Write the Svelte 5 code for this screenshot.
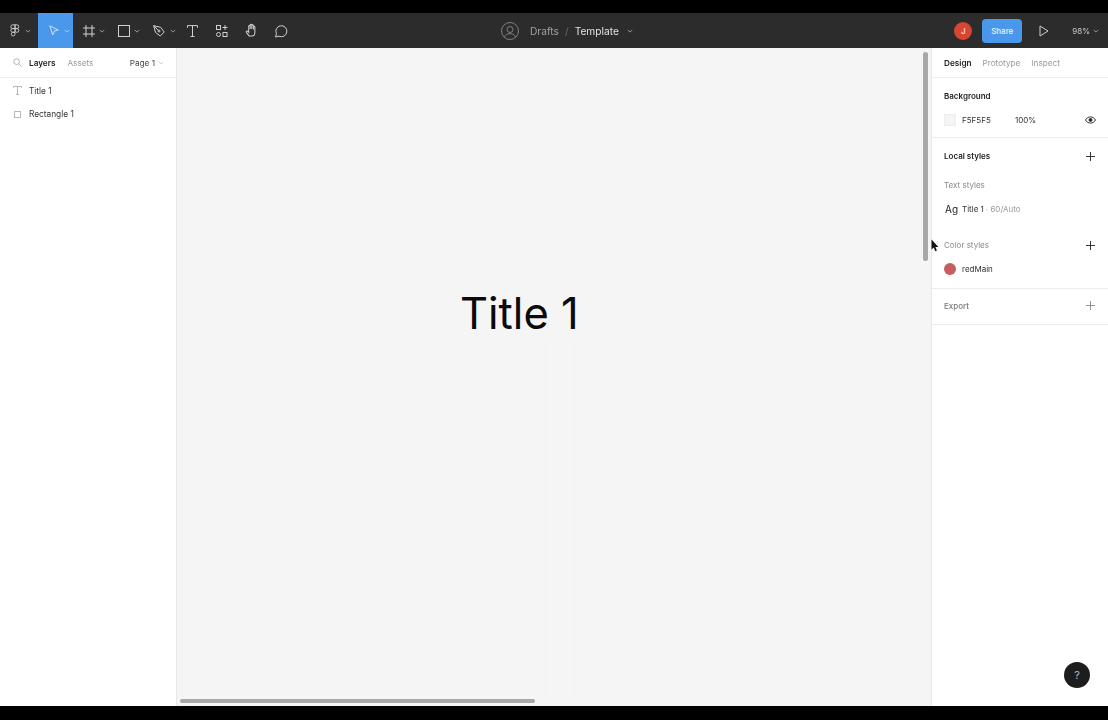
<script>
  const layers = [
    { name: 'Title 1', kind: 'text' },
    { name: 'Rectangle 1', kind: 'rect' }
  ];
</script>

<div class="screen">
  <header class="toolbar">
    <div class="tools">
      <button class="tool menu">
        <svg width="10" height="13" viewBox="0 0 12 16" fill="none" stroke="#d0d0d0" stroke-width="1.1">
          <path d="M6 1H3.200a2.300 2.300 0 0 0 0 4.600H6zM6 1h2.400a2.300 2.300 0 0 1 0 4.600H6zM6 5.600H3.200a2.300 2.300 0 0 0 0 4.600H6zM6 10.200H3.200A2.300 2.300 0 1 0 6 12.500zM10.700 7.900a2.300 2.300 0 1 1-4.700 0 2.300 2.300 0 0 1 4.700 0z" />
        </svg>
        <svg class="chev" viewBox="0 0 8 8"><path d="M1 2.500l3 3 3-3" /></svg>
      </button>
      <button class="tool move">
        <svg width="10" height="11" viewBox="0 0 10 11" fill="none" stroke="#cfe3fb" stroke-width="1">
          <path d="M0.800 0.800l8.400 4.200-3.800 1-1.700 4z" />
        </svg>
        <svg class="chev light" viewBox="0 0 8 8"><path d="M1 2.500l3 3 3-3" /></svg>
      </button>
      <button class="tool frame">
        <svg width="12" height="12" viewBox="0 0 12 12" fill="none" stroke="#d0d0d0" stroke-width="1">
          <path d="M3 0v12M9 0v12M0 3h12M0 9h12" />
        </svg>
        <svg class="chev" viewBox="0 0 8 8"><path d="M1 2.500l3 3 3-3" /></svg>
      </button>
      <button class="tool shape">
        <svg width="12" height="12" viewBox="0 0 12 12" fill="none" stroke="#d0d0d0" stroke-width="1">
          <rect x="0.500" y="0.500" width="11" height="11" />
        </svg>
        <svg class="chev" viewBox="0 0 8 8"><path d="M1 2.500l3 3 3-3" /></svg>
      </button>
      <button class="tool pen">
        <svg width="12" height="12" viewBox="0 0 12 12" fill="none" stroke="#d0d0d0" stroke-width="1">
          <path d="M0.700 0.700l7 1.600 3.500 4.700-3.900 4-4.800-3.500zM0.700 0.700l4.300 4.300" />
          <circle cx="6" cy="6" r="1" />
        </svg>
        <svg class="chev" viewBox="0 0 8 8"><path d="M1 2.500l3 3 3-3" /></svg>
      </button>
      <button class="tool single">
        <svg width="11" height="12" viewBox="0 0 11 12" fill="none" stroke="#d0d0d0" stroke-width="1">
          <path d="M0.500 2.800V0.600h10V2.800M5.500 0.600v10.800M3.500 11.500h4" />
        </svg>
      </button>
      <button class="tool single">
        <svg width="12" height="12" viewBox="0 0 12 12" fill="none" stroke="#d0d0d0" stroke-width="1">
          <rect x="0.500" y="0.500" width="4" height="4" />
          <path d="M9 0v5M6.500 2.500h5" />
          <circle cx="2.500" cy="9.500" r="2" />
          <rect x="7" y="7.500" width="4" height="4" />
        </svg>
      </button>
      <button class="tool single">
        <svg width="14" height="15" viewBox="0 0 15 15" fill="none" stroke="#d0d0d0" stroke-width="1.100" stroke-linecap="round">
          <path d="M4.500 13.500L1.500 9.500c-.7-1 .6-2 1.500-1.200L4 9.500V3c0-1.200 1.600-1.200 1.600 0v3-4.300c0-1.200 1.700-1.200 1.700 0V6 2.300c0-1.200 1.700-1.200 1.700 0V6.500 3.800c0-1.200 1.600-1.200 1.600 0V9.500c0 2.200-1.200 4-3 4z" />
        </svg>
      </button>
      <button class="tool single">
        <svg width="14" height="14" viewBox="0 0 14 14" fill="none" stroke="#d0d0d0" stroke-width="1">
          <path d="M1.500 13l1-3.200A5.500 5.500 0 1 1 5 12.200z" />
        </svg>
      </button>
    </div>

    <div class="breadcrumb">
      <svg class="avatar" width="18" height="18" viewBox="0 0 18 18" fill="none" stroke="#808080" stroke-width="1">
        <circle cx="9" cy="9" r="8.500" />
        <circle cx="9" cy="7.500" r="3" />
        <path d="M3.500 15c1-2.500 3-3.300 5.500-3.300s4.500.8 5.500 3.300" />
      </svg>
      <span class="drafts">Drafts</span>
      <span class="slash">/</span>
      <span class="file">Template</span>
      <svg class="chev" viewBox="0 0 8 8"><path d="M1 2.500l3 3 3-3" /></svg>
    </div>

    <div class="actions">
      <div class="user">J</div>
      <button class="share">Share</button>
      <svg class="play" width="10" height="12" viewBox="0 0 10 12" fill="none" stroke="#d0d0d0" stroke-width="1">
        <path d="M1 1l8 5-8 5z" />
      </svg>
      <span class="zoom">98%</span>
      <svg class="chev" viewBox="0 0 8 8"><path d="M1 2.500l3 3 3-3" /></svg>
    </div>
  </header>

  <main class="workspace">
    <aside class="left">
      <div class="tabs">
        <svg width="9" height="9" viewBox="0 0 10 10" fill="none" stroke="#aaa" stroke-width="1">
          <circle cx="4" cy="4" r="3.200" />
          <path d="M6.400 6.400L9.500 9.500" />
        </svg>
        <span class="tab on">Layers</span>
        <span class="tab">Assets</span>
        <span class="page">Page 1</span>
        <svg class="chev" viewBox="0 0 8 8"><path d="M1 2.500l3 3 3-3" /></svg>
      </div>
      <ul class="layers">
        {#each layers as layer}
          <li>
            {#if layer.kind === 'text'}
              <svg width="9" height="9" viewBox="0 0 9 9" fill="none" stroke="#b0b0b0" stroke-width="0.900">
                <path d="M0.500 1.800V0.500h8V1.800M4.500 0.500v8M3 8.500h3" />
              </svg>
            {:else}
              <svg width="9" height="9" viewBox="0 0 9 9" fill="none" stroke="#b8b8b8" stroke-width="1">
                <rect x="1.500" y="1.500" width="6" height="6" />
              </svg>
            {/if}
            <span>{layer.name}</span>
          </li>
        {/each}
      </ul>
    </aside>

    <section class="canvas">
      <h1 class="title">Title 1</h1>
      <div class="guide one"></div>
      <div class="guide two"></div>
      <div class="scroll vertical"></div>
      <div class="scroll horizontal"></div>
    </section>

    <aside class="right">
      <div class="tabs right-tabs">
        <span class="tab on">Design</span>
        <span class="tab">Prototype</span>
        <span class="tab">Inspect</span>
      </div>

      <div class="block background">
        <h2>Background</h2>
        <div class="fill">
          <span class="swatch"></span>
          <span class="hex">F5F5F5</span>
          <span class="pct">100%</span>
          <svg class="eye" width="11" height="8" viewBox="0 0 12 8" fill="none" stroke="#222" stroke-width="1">
            <path d="M0.500 4C2 1.500 4 0.600 6 0.600S10 1.500 11.500 4C10 6.500 8 7.400 6 7.400S2 6.500 0.500 4z" />
            <circle cx="6" cy="4" r="1.600" fill="#222" />
          </svg>
        </div>
      </div>

      <div class="block styles">
        <div class="head">
          <h2>Local styles</h2>
          <svg class="plus" viewBox="0 0 10 10"><path d="M5 0v10M0 5h10" /></svg>
        </div>
        <div class="sub text-sub">Text styles</div>
        <div class="text-style">
          <span class="ag">Ag</span>
          <span class="style-name">Title 1</span>
          <span class="style-meta">· 60/Auto</span>
        </div>
        <div class="head color-head">
          <span class="sub">Color styles</span>
          <svg class="plus" viewBox="0 0 10 10"><path d="M5 0v10M0 5h10" /></svg>
        </div>
        <div class="color-style">
          <span class="dot"></span>
          <span class="style-name">redMain</span>
        </div>
      </div>

      <div class="block export">
        <span class="sub strong">Export</span>
        <svg class="plus grey" viewBox="0 0 10 10"><path d="M5 0v10M0 5h10" /></svg>
      </div>

      <button class="help">?</button>
    </aside>
  </main>

  <svg class="cursor" width="8" height="13" viewBox="0 0 8 13"><path d="M0.500 0.500v10l2.300-2 1.500 3.800 1.600-.7-1.500-3.600h3z" fill="#111" /></svg>
</div>

<style>
  :global(body) {
    margin: 0;
    background: #000;
  }

  .screen {
    position: relative;
    width: 1108px;
    height: 720px;
    box-sizing: border-box;
    padding: 13px 0 14px;
    display: flex;
    flex-direction: column;
    background: #000;
    overflow: hidden;
    font-family: Inter, "Liberation Sans", sans-serif;
    font-size: 8px;
    color: #333;
  }

  button {
    border: none;
    padding: 0;
    font: inherit;
    background: none;
  }

  /* the reference is a video frame, so everything is a touch soft */
  .tools,
  .breadcrumb,
  .actions,
  .tabs,
  .layers,
  .block {
    filter: blur(0.3px);
  }

  /* toolbar */
  .toolbar {
    height: 35px;
    flex: none;
    background: #2c2c2c;
    display: flex;
    justify-content: space-between;
    align-items: center;
    position: relative;
  }

  .tools {
    display: flex;
    height: 100%;
    align-items: stretch;
  }

  .tool {
    display: flex;
    align-items: center;
    box-sizing: border-box;
    padding-left: 10px;
    gap: 4px;
    width: 35px;
  }

  .tool.menu {
    width: 38px;
    gap: 5px;
  }

  .tool.move {
    background: #4a98ec;
    padding-left: 11px;
    gap: 5px;
  }

  .tool.pen { gap: 5px; }

  .tool.single {
    width: 29.500px;
    padding: 0;
    justify-content: center;
  }

  .chev {
    width: 6px;
    height: 6px;
    fill: none;
    stroke: #bbb;
    stroke-width: 1;
  }

  .chev.light { stroke: #cfe3fb; }

  .breadcrumb {
    position: absolute;
    left: 501px;
    top: 0;
    height: 100%;
    display: flex;
    align-items: center;
    font-size: 10.200px;
  }

  .avatar { margin-right: 11px; }
  .drafts { color: #a0a0a0; }
  .slash { color: #666; margin: 0 6px; }
  .file { color: #e2e2e2; margin-right: 8px; }

  .actions {
    display: flex;
    align-items: center;
    padding-right: 9px;
  }

  .user {
    width: 18px;
    height: 18px;
    border-radius: 50%;
    background: #d64632;
    color: #f6d5cf;
    font-size: 8px;
    font-weight: 600;
    display: flex;
    align-items: center;
    justify-content: center;
    margin-right: 10px;
  }

  .share {
    width: 40px;
    height: 24px;
    border-radius: 4px;
    background: #4a98ec;
    color: #e8f2fd;
    font-size: 8px;
    font-weight: 500;
    margin-right: 17px;
  }

  .play { margin-right: 23px; }
  .zoom { color: #ccc; margin-right: 3px; }

  /* panels */
  .workspace {
    flex: 1;
    min-height: 0;
    display: flex;
  }

  .left {
    width: 176px;
    flex: none;
    background: #fff;
    border-right: 1px solid #e8e8e8;
  }

  .right {
    width: 176px;
    flex: none;
    background: #fff;
    border-left: 1px solid #e8e8e8;
    position: relative;
  }

  .tabs {
    height: 30px;
    display: flex;
    align-items: center;
    border-bottom: 1px solid #ececec;
    padding-left: 13px;
    box-sizing: border-box;
    font-size: 8.200px;
  }

  .tab {
    color: #999;
    margin-left: 12px;
  }

  .tab.on {
    color: #222;
    font-weight: 600;
  }

  .tabs > svg + .tab { margin-left: 7px; }

  .page {
    margin-left: auto;
    color: #444;
    margin-right: 3px;
  }

  .left .tabs { padding-right: 12px; }

  .right-tabs { padding-left: 12px; }
  .right-tabs .tab:first-child { margin-left: 0; }
  .right-tabs .tab { margin-left: 11px; }

  .layers {
    list-style: none;
    margin: 0;
    padding: 1px 0 0;
    font-size: 8.300px;
  }

  .layers li {
    height: 23.500px;
    display: flex;
    align-items: center;
    gap: 7px;
    padding-left: 13px;
    color: #333;
  }

  .canvas {
    flex: 1;
    position: relative;
    background: #f5f5f5;
  }

  .title {
    position: absolute;
    left: 283px;
    top: 235px;
    margin: 0;
    font-size: 43.500px;
    font-weight: 400;
    line-height: 60px;
    color: #0a0a0a;
    white-space: nowrap;
  }

  .guide {
    position: absolute;
    top: 290px;
    bottom: 10px;
    width: 1px;
    background: #f2f2f2;
  }

  .guide.one { left: 368px; }
  .guide.two { left: 397px; }

  .scroll {
    position: absolute;
    background: #a8a8a8;
    border-radius: 3px;
  }

  .scroll.vertical {
    left: 746px;
    top: 4px;
    width: 5px;
    height: 209px;
  }

  .scroll.horizontal {
    left: 3px;
    bottom: 3px;
    width: 355px;
    height: 4px;
  }

  h2 {
    margin: 0;
    font-size: 8px;
    line-height: 10px;
    font-weight: 600;
    color: #222;
  }

  .block {
    padding: 0 12px;
    border-bottom: 1px solid #ececec;
    box-sizing: border-box;
  }

  .background {
    height: 60px;
    padding-top: 13px;
  }

  .fill {
    display: flex;
    align-items: center;
    margin-top: 12px;
    height: 14px;
  }

  .swatch {
    width: 12px;
    height: 12px;
    background: #f4f4f4;
    border: 1px solid #eee;
    box-sizing: border-box;
    margin-right: 6px;
  }

  .hex { width: 53px; }
  .eye { margin-left: auto; }

  .head {
    display: flex;
    align-items: center;
    justify-content: space-between;
    height: 10px;
  }

  .plus {
    width: 9px;
    height: 9px;
    fill: none;
    stroke: #222;
    stroke-width: 1;
    margin-right: 1px;
  }

  .plus.grey { stroke: #888; }

  .styles {
    height: 151px;
    padding-top: 13px;
  }

  .sub {
    color: #8a8a8a;
    line-height: 10px;
  }

  .sub.strong { font-weight: 500; color: #777; }

  .text-sub { margin-top: 19px; }

  .text-style {
    display: flex;
    align-items: center;
    margin-top: 12px;
    height: 14px;
  }

  .ag {
    font-size: 10px;
    color: #222;
    width: 18px;
    padding-left: 1px;
    box-sizing: border-box;
  }

  .style-name { color: #333; }
  .style-meta { color: #999; margin-left: 2px; }

  .color-head { margin-top: 24px; }

  .color-style {
    display: flex;
    align-items: center;
    gap: 6px;
    margin-top: 13px;
  }

  .dot {
    width: 12px;
    height: 12px;
    border-radius: 50%;
    background: #c85d5f;
  }

  .export {
    height: 36px;
    padding-bottom: 2px;
    display: flex;
    align-items: center;
    justify-content: space-between;
  }

  .help {
    position: absolute;
    right: 18px;
    bottom: 18px;
    width: 26px;
    height: 26px;
    border-radius: 50%;
    background: #1d1d1d;
    color: #bbb;
    font-size: 11px;
  }

  .cursor {
    position: absolute;
    left: 931px;
    top: 239px;
  }
</style>
